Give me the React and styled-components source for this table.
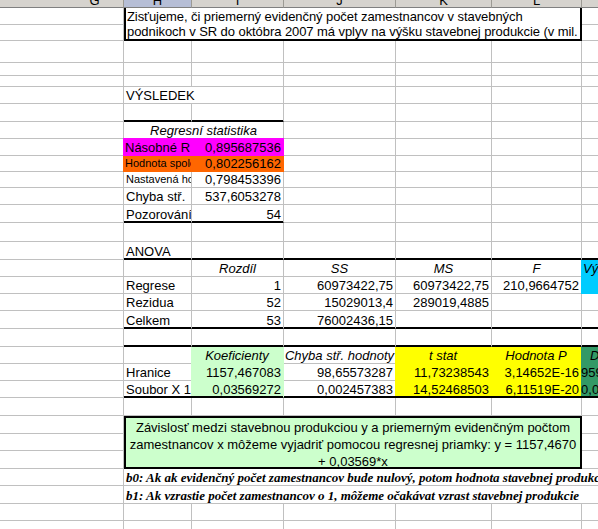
import styled, { createGlobalStyle } from "styled-components";

const GlobalStyle = createGlobalStyle`
  body {
    margin: 0;
    background: #fff;
    overflow: hidden;
  }
`;

const GRID = "#c0c0c0";
const MAGENTA = "#ff00ff";
const ORANGE = "#ff6600";
const CYAN = "#00ccff";
const LGREEN = "#ccffcc";
const YELLOW = "#ffff00";
const DGREEN = "#339966";

// G (cut off on the left), H, I, J, K, L, M (cut off on the right)
const COLS = [124, 68, 92, 112, 96, 90, 78];
const ROWS = [
  8, 17, 16, 22, 13, 11, 17, 18, 17, 17, 16, 16, 17, 18, 19, 18, 17, 17, 17,
  18, 18, 17, 17, 17, 18, 18, 17, 18, 17, 18, 17, 17,
];
const LETTERS = ["G", "H", "I", "J", "K", "L", "M"];

const E = {};
const T = { thick: true };
const empty = () => [E, E, E, E, E, E, E];

const rows = [
  [E, { kind: "intro" }, E],
  [E, E],
  empty(),
  empty(),
  empty(),
  [E, { t: "VÝSLEDEK", span: 2 }, E, E, E, E],
  [E, T, T, E, E, E, E],
  [E, { t: "Regresní statistika", span: 2, a: "c", i: true }, E, E, E, E],
  [
    E,
    { t: "Násobné R", bg: MAGENTA, lift: true },
    { t: "0,895687536", a: "r", bg: MAGENTA, lift: true },
    E, E, E, E,
  ],
  [
    E,
    { t: "Hodnota spolehlivosti R", s: true, bg: ORANGE },
    { t: "0,802256162", a: "r", bg: ORANGE },
    E, E, E, E,
  ],
  [
    E,
    { t: "Nastavená hodnota spolehlivosti R", s: true },
    { t: "0,798453396", a: "r" },
    E, E, E, E,
  ],
  [E, { t: "Chyba stř." }, { t: "537,6053278", a: "r" }, E, E, E, E],
  [E, { t: "Pozorování", thick: true }, { t: "54", a: "r", thick: true }, E, E, E, E],
  empty(),
  [E, { t: "ANOVA", thick: true }, T, T, T, T, T],
  [
    E,
    E,
    { t: "Rozdíl", a: "c", i: true },
    { t: "SS", a: "c", i: true },
    { t: "MS", a: "c", i: true },
    { t: "F", a: "c", i: true },
    { t: "Významnosť F", i: true, bg: CYAN },
  ],
  [
    E,
    { t: "Regrese" },
    { t: "1", a: "r" },
    { t: "60973422,75", a: "r" },
    { t: "60973422,75", a: "r" },
    { t: "210,9664752", a: "r" },
    { bg: CYAN },
  ],
  [
    E,
    { t: "Rezidua" },
    { t: "52", a: "r" },
    { t: "15029013,4", a: "r" },
    { t: "289019,4885", a: "r" },
    E,
    E,
  ],
  [
    E,
    { t: "Celkem", thick: true },
    { t: "53", a: "r", thick: true },
    { t: "76002436,15", a: "r", thick: true },
    T, T, T,
  ],
  [E, T, T, T, T, T, T],
  [
    E,
    E,
    { t: "Koeficienty", a: "c", i: true, bg: LGREEN },
    { t: "Chyba stř. hodnoty", a: "c", i: true },
    { t: "t stat", a: "c", i: true, bg: YELLOW },
    { t: "Hodnota P", a: "c", i: true, bg: YELLOW },
    { t: "Dolní 95%", a: "c", i: true, bg: DGREEN },
  ],
  [
    E,
    { t: "Hranice" },
    { t: "1157,467083", a: "r", bg: LGREEN },
    { t: "98,65573287", a: "r" },
    { t: "11,73238543", a: "r", bg: YELLOW },
    { t: "3,14652E-16", a: "r", bg: YELLOW },
    { t: "959,5051727", a: "r", bg: DGREEN },
  ],
  [
    E,
    { t: "Soubor X 1", thick: true },
    { t: "0,03569272", a: "r", bg: LGREEN, thick: true },
    { t: "0,002457383", a: "r", thick: true },
    { t: "14,52468503", a: "r", bg: YELLOW, thick: true },
    { t: "6,11519E-20", a: "r", bg: YELLOW, thick: true },
    { t: "0,030761398", a: "r", bg: DGREEN, thick: true },
  ],
  empty(),
  [E, { kind: "summary" }, E],
  [E, E],
  [E, E],
  [
    E,
    {
      t: "b0: Ak ak evidenčný počet zamestnancov bude nulový, potom hodnota stavebnej produkcie",
      span: 6,
      note: true,
    },
  ],
  [
    E,
    {
      t: "b1: Ak vzrastie počet zamestnancov o 1, môžeme očakávat vzrast stavebnej produkcie",
      span: 6,
      note: true,
    },
  ],
  empty(),
  empty(),
];

const Sheet = styled.div`
  display: grid;
  grid-template-columns: ${COLS.map((c) => `${c}px`).join(" ")};
  grid-template-rows: ${ROWS.map((r) => `${r}px`).join(" ")};
  width: max-content;
  font-family: "Liberation Sans", Arial, sans-serif;
  font-size: 13px;
  color: #000;
`;

const HeaderCell = styled.div`
  display: flex;
  align-items: flex-end;
  justify-content: center;
  padding-left: ${(p) => p.$pad || 0}px;
  overflow: hidden;
  line-height: 13px;
  background: ${(p) => (p.$active ? "#b6bed6" : "#d6d3ce")};
  border-right: 1px solid #9c9a94;
  border-bottom: 1px solid #808080;
  color: #000;
`;

const justify = { l: "flex-start", r: "flex-end", c: "center" };

const Cell = styled.div`
  grid-column: span ${(p) => p.$span || 1};
  display: flex;
  align-items: flex-end;
  justify-content: ${(p) => justify[p.$align || "l"]};
  padding: 0 2px;
  overflow: hidden;
  white-space: nowrap;
  line-height: 15px;
  font-size: ${(p) => (p.$small ? "11px" : "13px")};
  font-style: ${(p) => (p.$italic ? "italic" : "normal")};
  background: ${(p) => p.$bg || "#fff"};
  border-right: 1px solid ${(p) => p.$bg || GRID};
  border-bottom: 1px solid ${(p) => (p.$thick ? "#000" : p.$bg || GRID)};
  box-shadow: ${(p) => (p.$thick ? "inset 0 -1px 0 #000" : "none")};
  margin-left: ${(p) => (p.$bg ? "-1px" : "0")};
  margin-top: ${(p) => (p.$lift ? "-1px" : "0")};
`;

const Note = styled(Cell)`
  font-family: "Liberation Serif", "Times New Roman", serif;
  font-weight: bold;
  font-style: italic;
  font-size: 13px;
  line-height: 15px;
`;

const IntroBox = styled.div`
  grid-column: span 5;
  grid-row: span 2;
  padding: 1px 0 0 1px;
  line-height: 15px;
  letter-spacing: -0.07px;
  overflow: hidden;
  background: #fff;
  border: 2px solid #000;
  border-top: none;
`;

const SummaryBox = styled.div`
  grid-column: span 5;
  grid-row: span 3;
  padding-top: 1px;
  line-height: 17px;
  text-align: center;
  overflow: hidden;
  background: ${LGREEN};
  border: 2px solid #000;
`;

const Line = styled.div`
  white-space: nowrap;
`;

const renderCell = (c, key) => {
  if (c.kind === "intro")
    return (
      <IntroBox key={key}>
        <Line>Zisťujeme, či priemerný evidenčný počet zamestnancov v stavebných</Line>
        <Line>podnikoch v SR do októbra 2007 má vplyv na výšku stavebnej produkcie (v mil.</Line>
      </IntroBox>
    );
  if (c.kind === "summary")
    return (
      <SummaryBox key={key}>
        <Line>Závislosť medzi stavebnou produkciou y a priemerným evidenčným počtom</Line>
        <Line>zamestnancov x môžeme vyjadriť pomocou regresnej priamky: y = 1157,4670</Line>
        <Line>+ 0,03569*x</Line>
      </SummaryBox>
    );
  const Comp = c.note ? Note : Cell;
  return (
    <Comp
      key={key}
      $span={c.span}
      $align={c.a}
      $italic={c.i}
      $small={c.s}
      $bg={c.bg}
      $thick={c.thick}
      $lift={c.lift}
    >
      {c.t}
    </Comp>
  );
};

export default function App() {
  return (
    <>
      <GlobalStyle />
      <Sheet>
        {LETTERS.map((l) => (
          <HeaderCell key={l} $active={l === "H"} $pad={l === "G" ? 66 : 0}>
            {l}
          </HeaderCell>
        ))}
        {rows.map((row, r) => row.map((c, i) => renderCell(c, `${r}-${i}`)))}
      </Sheet>
    </>
  );
}
